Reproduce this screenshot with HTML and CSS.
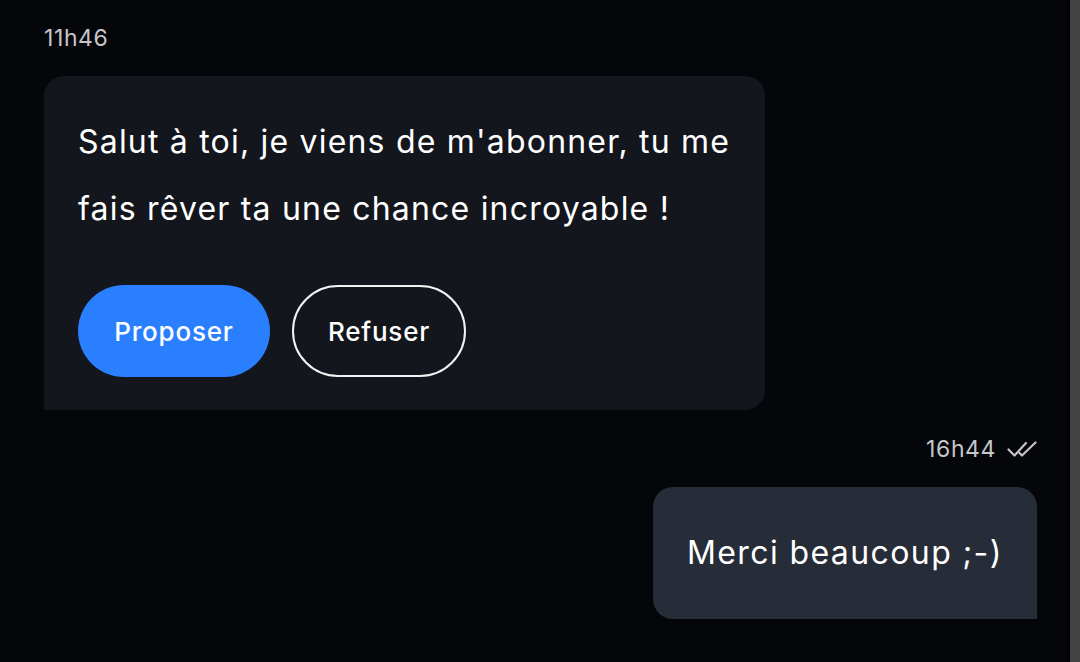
FILE: index.html
```html
<!DOCTYPE html>
<html lang="fr">
<head>
<meta charset="utf-8">
<link rel="stylesheet" href="styles.css">
</head>
<body>
<div class="screen">
  <main class="chat">
    <div class="time time-in">11h46</div>
    <div class="bubble bubble-in">
      <p class="msg">Salut à toi, je viens de m'abonner, tu me<br>fais rêver ta une chance incroyable !</p>
      <div class="actions">
        <button class="btn btn-primary">Proposer</button>
        <button class="btn btn-outline">Refuser</button>
      </div>
    </div>
    <div class="meta-out">
      <span class="time">16h44</span>
      <svg class="ticks" width="30" height="20" viewBox="0 0 30 20" fill="none" stroke="#c4c4c8" stroke-width="2.2" stroke-linecap="round" stroke-linejoin="round">
        <path d="M1.5 10.5 L7.5 16.5 L19 4"/>
        <path d="M12.5 14 L15 16.5 L28.5 3.5"/>
      </svg>
    </div>
    <div class="bubble bubble-out">
      <p class="msg">Merci beaucoup ;-)</p>
    </div>
  </main>
  <div class="scroll-edge"></div>
  <div class="scrollbar"></div>
</div>
</body>
</html>
```
FILE: styles.css
```css
html, body {
  margin: 0;
  padding: 0;
  background: #05060a;
}
body {
  width: 1080px;
  height: 662px;
  overflow: hidden;
  font-family: "Inter", "Noto Sans", sans-serif;
  color: #ffffff;
}
.screen {
  display: flex;
  height: 662px;
}
.chat {
  flex: 1;
  display: flex;
  flex-direction: column;
  padding: 24px 29px 0 44px;
}
.time {
  font-size: 23px;
  line-height: 28px;
  color: #c6c6ca;
  letter-spacing: 0.6px;
}
.time-in {
  height: 28px;
}
.bubble {
  border-radius: 20px;
}
.bubble-in {
  margin-top: 24px;
  width: 721px;
  box-sizing: border-box;
  background: #13161d;
  border-bottom-left-radius: 0;
  padding: 32px 10px 33px 34px;
}
.msg {
  margin: 0;
  font-size: 32px;
  line-height: 67px;
  letter-spacing: 1.2px;
  color: #ffffff;
  white-space: nowrap;
}
.actions {
  display: flex;
  gap: 22px;
  margin-top: 43px;
}
.btn {
  font-family: inherit;
  font-size: 26px;
  font-weight: 500;
  letter-spacing: 0.8px;
  color: #ffffff;
  height: 92px;
  border-radius: 46px;
  padding: 0;
  cursor: pointer;
}
.btn-primary {
  width: 192px;
  background: #2a7ffe;
  border: none;
}
.btn-outline {
  width: 174px;
  background: transparent;
  border: 2px solid #f2f2f2;
}
.meta-out {
  margin-top: 27px;
  align-self: flex-end;
  display: flex;
  align-items: center;
  gap: 11px;
  height: 24px;
}
.bubble-out {
  margin-top: 26px;
  align-self: flex-end;
  width: 384px;
  height: 132px;
  box-sizing: border-box;
  background: #262c38;
  border-bottom-right-radius: 0;
  display: flex;
  align-items: center;
  padding: 0 10px 0 34px;
}
.bubble-out .msg {
  line-height: 40px;
  letter-spacing: 1.4px;
}
.scroll-edge {
  width: 4px;
  background: #020305;
}
.scrollbar {
  width: 10px;
  background: #434343;
}
```
